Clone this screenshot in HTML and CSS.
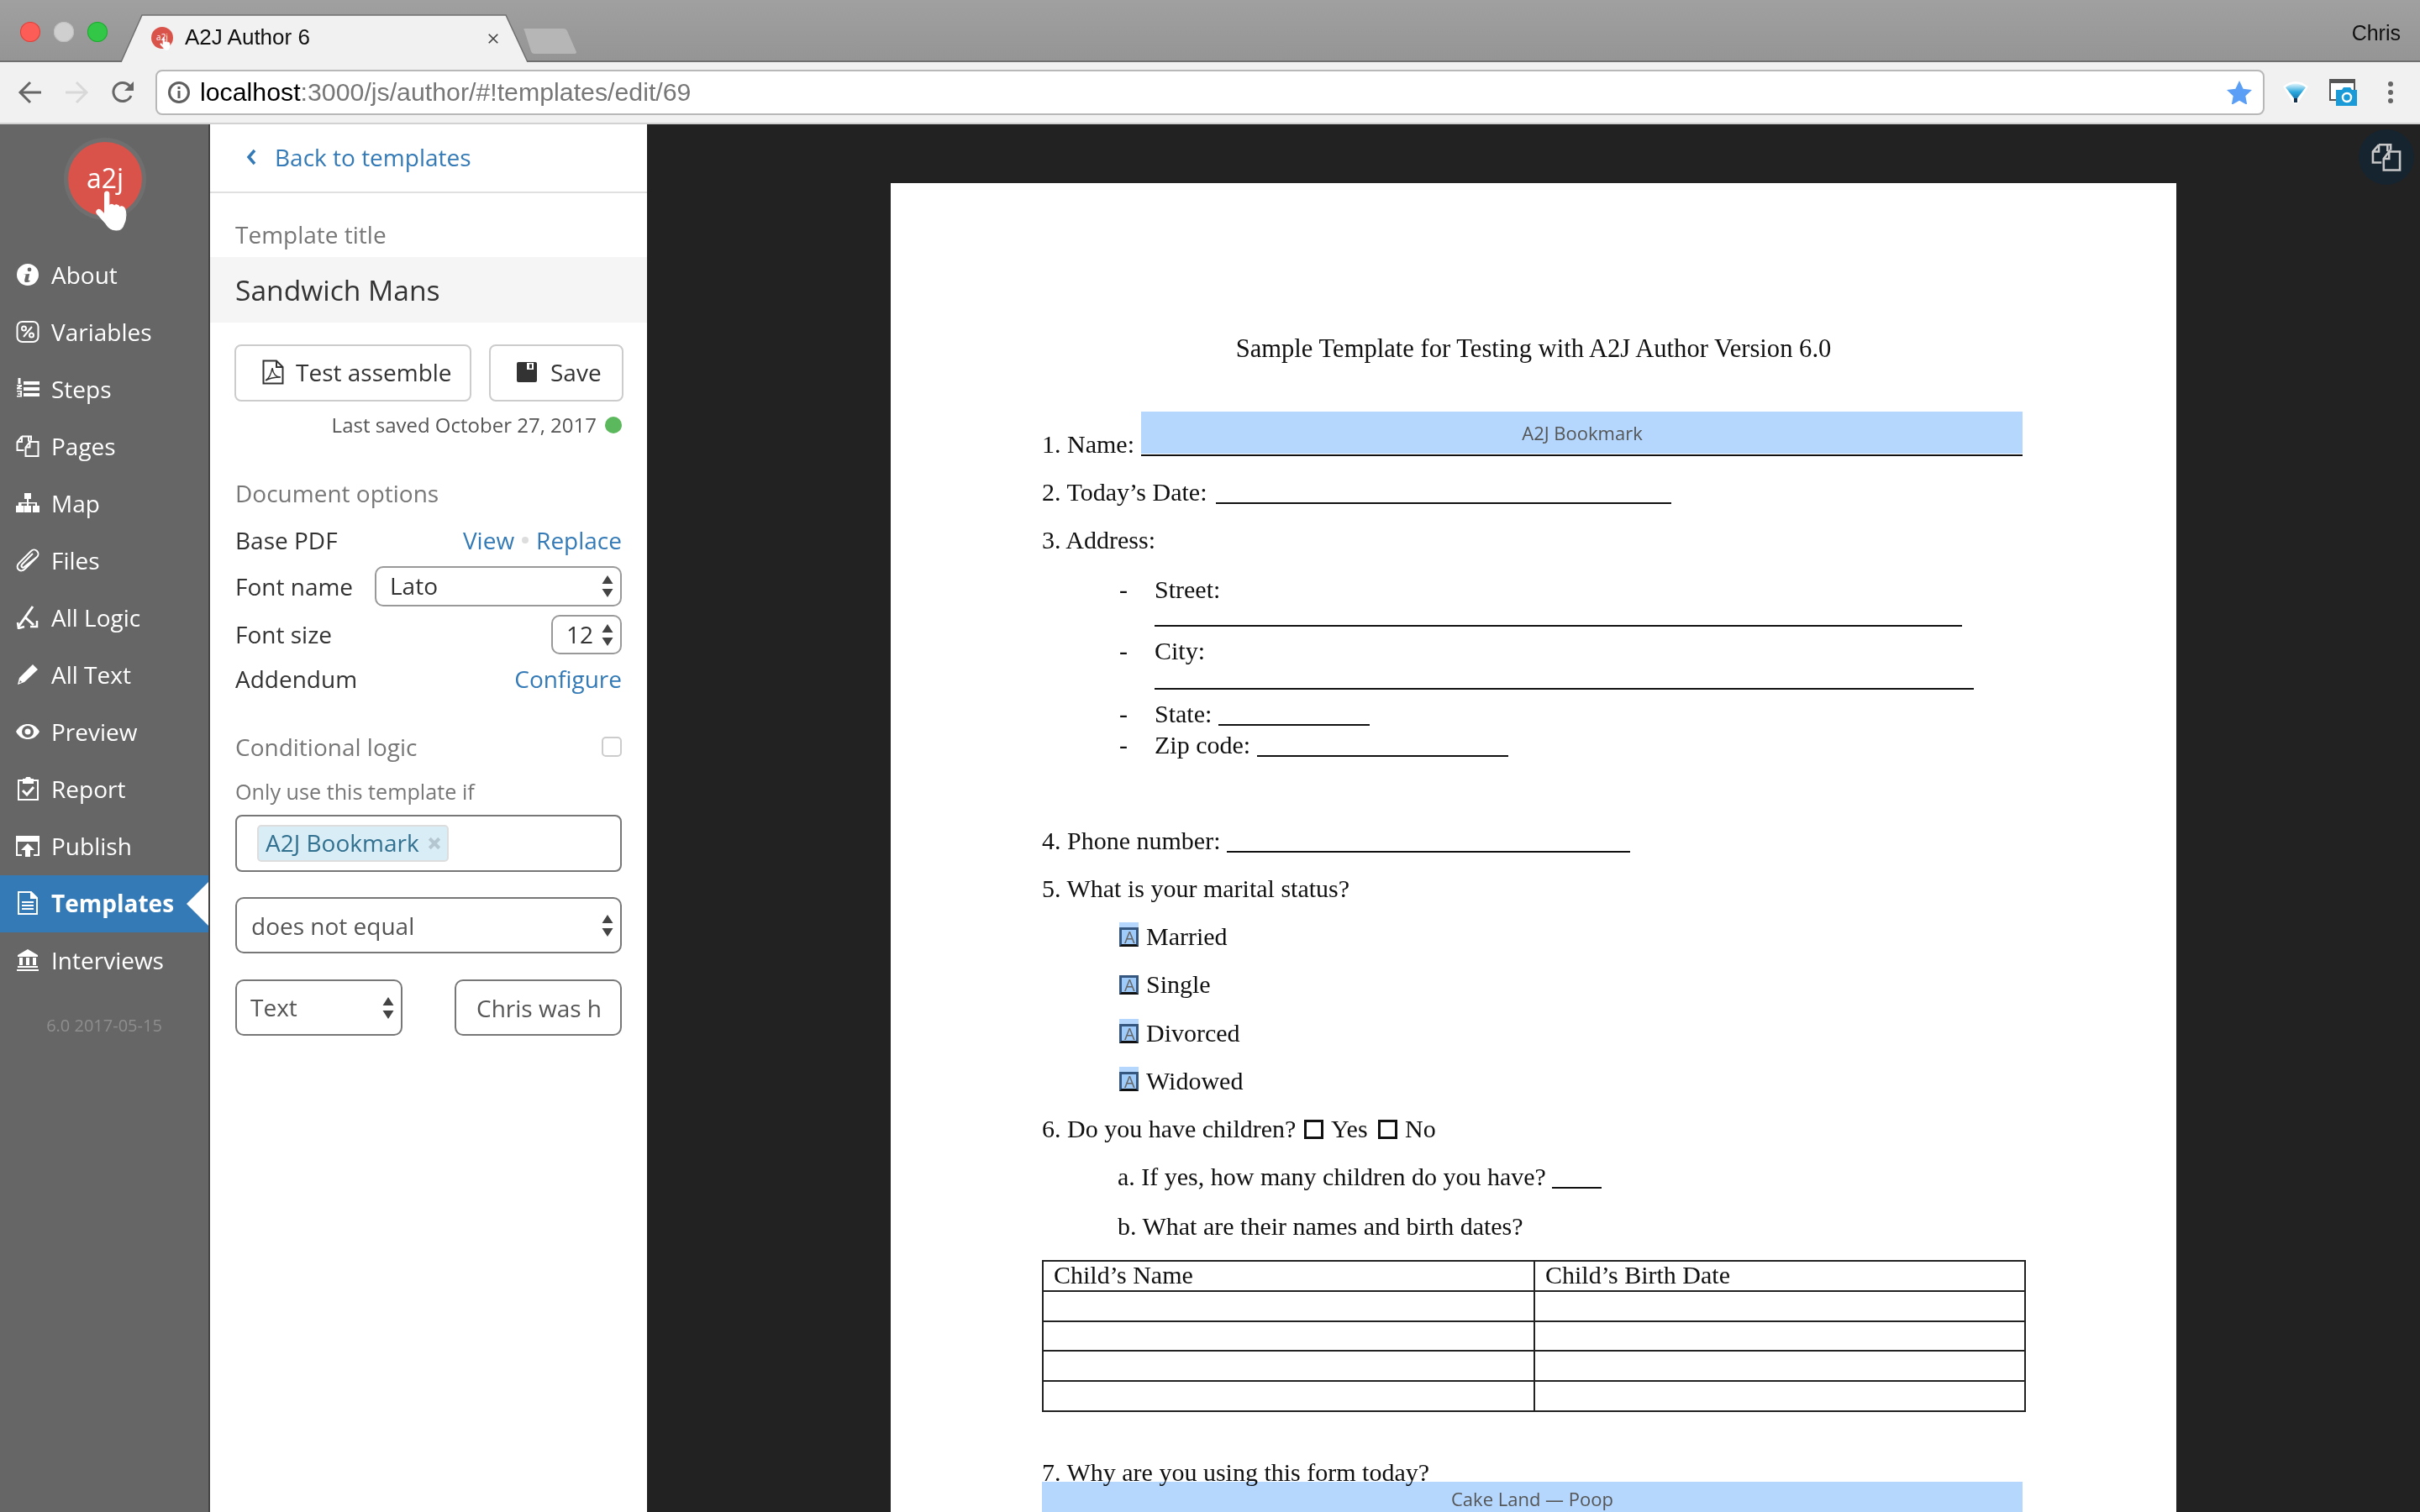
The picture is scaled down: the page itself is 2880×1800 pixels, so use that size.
FILE: index.html
```html
<!DOCTYPE html>
<html lang="en">
<head>
<meta charset="utf-8">
<title>A2J Author 6</title>
<link rel="stylesheet" href="styles.css">
</head>
<body>
<svg class="defs" aria-hidden="true">
  <defs><linearGradient id="funnel-fill" x1="0" y1="0" x2="0" y2="1"><stop offset="0" stop-color="#e4f7fd"/><stop offset=".45" stop-color="#2aa7dd"/><stop offset="1" stop-color="#0b5f96"/></linearGradient></defs>
  <symbol id="updown" viewBox="0 0 14 26"><path d="M7 0l6.500 10H.5zM7 26L.5 16h13z"/></symbol>
  <symbol id="pages" viewBox="0 0 28 28" fill="none" stroke="currentColor" stroke-width="2"><path d="M7 2.500h8v6M15 2.500h3v5M7 2.500L1.500 9v10h8M7 2.500V9H1.500"/><path d="M15 9h3.500M16.500 9h10v17h-15v-10.500L16.500 9v6.500h-5"/></symbol>
  <symbol id="hand" viewBox="0 0 40 46"><path fill="#fff" stroke="#fff" stroke-width="1" stroke-linejoin="round" d="M11 4c0-4 5-4 5 0v14c1-3 5-3 6 0 1-3 5-2 6 1 2-2 5-1 6 2 2 6 1 13-2 19-1 3-4 5-8 5-6 0-9-3-12-8L3 27c-3-3 0-7 3-5l5 5z"/></symbol>
</svg>

<header class="chrome">
  <div class="tabstrip">
    <div class="lights">
      <span class="light light-red"></span>
      <span class="light light-grey"></span>
      <span class="light light-green"></span>
    </div>
    <div class="tab">
      <svg class="tab-shape" viewBox="0 0 484 56" preserveAspectRatio="none"><path d="M0 56L25 1H458L484 56" fill="#f1f1f1" stroke="#6f6f6f" stroke-width="1.500"/></svg>
      <span class="favicon">
        <span class="favicon-text">a2j</span>
        <svg class="favicon-hand"><use href="#hand"/></svg>
      </span>
      <span class="tab-title">A2J Author 6</span>
      <svg class="tab-close" viewBox="0 0 16 16"><path d="M2 2l12 12M14 2L2 14" stroke="#444" stroke-width="2"/></svg>
    </div>
    <svg class="newtab" viewBox="0 0 64 30"><path d="M2 2Q0 0 3 0H48Q52 0 53 3L64 28Q64 30 61 30H14Q11 30 10 27z" fill="#b6b6b6"/></svg>
    <span class="profile">Chris</span>
  </div>
  <div class="toolbar">
    <svg class="tb-icon" viewBox="0 0 30 30" fill="none" stroke="#666" stroke-width="3"><path d="M28 15H3M15 3L3 15l12 12"/></svg>
    <svg class="tb-icon" viewBox="0 0 30 30" fill="none" stroke="#d8d8d8" stroke-width="3"><path d="M2 15h25M15 3l12 12-12 12"/></svg>
    <svg class="tb-icon" viewBox="0 0 30 30" fill="none" stroke="#666" stroke-width="3"><path d="M25 19a11 11 0 1 1-2-12l4 4"/><path d="M28 2v11H17z" fill="#666" stroke="none"/></svg>
    <div class="omnibox">
      <svg class="info" viewBox="0 0 28 28" fill="none" stroke="#5f5f5f" stroke-width="3"><circle cx="14" cy="14" r="11.500"/><path d="M14 12v9M14 7v3"/></svg>
      <span class="url"><span class="host">localhost</span>:3000/js/author/#!templates/edit/69</span>
      <svg class="star" viewBox="0 0 30 28"><path d="M15 0l4.600 9.800 10.400 1.300-7.700 7.200 2 10.700-9.300-5.300-9.300 5.300 2-10.700L0 11.100l10.400-1.300z" fill="#5a9ff5"/></svg>
    </div>
    <svg class="ext ext-funnel" viewBox="0 0 32 32"><path d="M1 9Q16-3 31 9L20 27q-4 6-8 0z" fill="#fff"/><path d="M4 10Q16 1 28 10L18 23v5h-4v-5z" fill="url(#funnel-fill)"/><path d="M14 23h4v5h-4z" fill="#14304a"/></svg>
    <svg class="ext ext-camera" viewBox="0 0 34 32"><path d="M1 1h29v24H1z" fill="#fff" stroke="#555" stroke-width="2"/><path d="M1 1h29v4H1z" fill="#555"/><path d="M8 13h7l2-3h8l2 3h6v19H8z" fill="#1a9ad6"/><circle cx="21" cy="22" r="5" fill="none" stroke="#fff" stroke-width="2.500"/></svg>
    <span class="menu-dots"><i></i><i></i><i></i></span>
  </div>
</header>

<div class="app">
  <nav class="nav">
    <div class="logo">
      <span class="logo-text">a2j</span>
      <svg class="logo-hand"><use href="#hand"/></svg>
    </div>
    <a class="nav-item"><svg class="nav-icon" viewBox="0 0 28 28"><path fill="#fff" fill-rule="evenodd" d="M14 1a13 13 0 1 1 0 26 13 13 0 0 1 0-26zm2 4.500a2.400 2.400 0 1 0 0 4.800 2.400 2.400 0 0 0 0-4.800zM10 12.500l-.3 1.300c1.800-.3 2.100.2 1.700 1.700l-1.100 4.500c-.6 2.600.8 3.200 2.700 3 1.300-.1 2.500-.6 3.500-1.100l.3-1.200c-1.900.5-2.300 0-2-1.400l1.400-6.400c-2 .2-4 .3-6.200.6z"/></svg>About</a>
    <a class="nav-item"><svg class="nav-icon" viewBox="0 0 28 28" fill="none" stroke="#fff" stroke-width="2"><rect x="1.500" y="2" width="25" height="24" rx="6"/><path d="M19 8L9 20"/><circle cx="9.500" cy="10" r="2.500"/><circle cx="18.500" cy="18" r="2.500"/></svg>Variables</a>
    <a class="nav-item"><svg class="nav-icon" viewBox="0 0 28 28" fill="#fff"><path d="M9 5h19v4H9zM9 12h19v4H9zM9 19h19v4H9z"/><path d="M2.500 1h3v7h-3zM1 9h6v2.300L4 13h3v1.500H1v-2l3-2H1zM1 16h6v7.500H1V22h4.200v-1.300H2v-1.400h3.200v-1.800H1z"/></svg>Steps</a>
    <a class="nav-item"><svg class="nav-icon"><use href="#pages"/></svg>Pages</a>
    <a class="nav-item"><svg class="nav-icon" viewBox="0 0 28 28" fill="#fff"><path d="M10 2h8v7h-3v4h10v4h3v8h-8v-8h3v-2.500h-8V17h3v8h-8v-8h3v-2.500H6.500V17h3v8H0v-8h3v-4h10V9h-3z"/></svg>Map</a>
    <a class="nav-item"><svg class="nav-icon" viewBox="0 0 28 28" fill="none" stroke="#fff" stroke-width="2"><path d="M25 10L11 24c-3 3-6 3-8 1s-2-5 1-8L18 3c2-2 5-2 7 0s2 5 0 7L11 21c-2 2-3 2-4 1s-1-2 1-4L20 6"/></svg>Files</a>
    <a class="nav-item"><svg class="nav-icon" viewBox="0 0 28 28" fill="none" stroke="#fff" stroke-width="3"><path d="M20 1L8 18 3 25M11 14l10 9"/><path d="M2 20l1 7 7-2M17 25h8v-7" stroke-width="2.500"/></svg>All Logic</a>
    <a class="nav-item"><svg class="nav-icon" viewBox="0 0 28 28" fill="#fff"><path d="M20 2l6 6L10 23l-8 3 2-8zM4 24l3-1-2-2z"/></svg>All Text</a>
    <a class="nav-item"><svg class="nav-icon" viewBox="0 0 28 28"><path fill="#fff" fill-rule="evenodd" d="M0 14C4 7 9 5 14 5s10 2 14 9c-4 7-9 9-14 9S4 21 0 14zm14-7a7 7 0 1 0 0 14 7 7 0 0 0 0-14zm0 3.500a3.500 3.500 0 1 1 0 7 3.500 3.500 0 0 1 0-7z"/></svg>Preview</a>
    <a class="nav-item"><svg class="nav-icon" viewBox="0 0 28 28" fill="none" stroke="#fff" stroke-width="2"><path d="M9 4H3v23h23V4h-6"/><path d="M9 3h3a2.500 2.500 0 0 1 5 0h3v4H9z" fill="#fff"/><path d="M8 16l5 5 8-9" stroke-width="3"/></svg>Report</a>
    <a class="nav-item"><svg class="nav-icon" viewBox="0 0 28 28" fill="none" stroke="#fff" stroke-width="2"><path d="M7 25H1V3h26v22h-6"/><path d="M1 4h26v4H1z" fill="#fff"/><path d="M14 11l8 8h-5v8h-6v-8H6z" fill="#fff" stroke="none"/></svg>Publish</a>
    <a class="nav-item nav-active"><svg class="nav-icon" viewBox="0 0 28 28" fill="none" stroke="#fff" stroke-width="2"><path d="M3 1h15l7 7v19H3z"/><path d="M18 1v7h7" fill="#fff"/><path d="M7 13h14M7 17h14M7 21h14"/></svg>Templates</a>
    <a class="nav-item"><svg class="nav-icon" viewBox="0 0 28 28" fill="#fff"><path d="M14 1l12 7v2H2V8zM4 11h4v9H4zM12 11h4v9h-4zM20 11h4v9h-4zM2 21h24v2H2zM1 25h26v2H1z"/></svg>Interviews</a>
    <p class="version">6.0 2017-05-15</p>
  </nav>

  <aside class="panel">
    <a class="back"><svg class="back-chevron" viewBox="0 0 12 20"><path d="M10 2L3 10l7 8" fill="none" stroke="#337ab7" stroke-width="3.500"/></svg>Back to templates</a>
    <div class="label label-title">Template title</div>
    <div class="title-input">Sandwich Mans</div>
    <div class="actions">
      <button class="btn btn-test"><svg class="btn-icon" viewBox="0 0 26 30" fill="none" stroke="#333" stroke-width="2"><path d="M1.500 1.500H17L24.500 9v19.500h-23zM17 1.500V9h7.500"/><path d="M4 25c5-3 7-9 8-15 1 7 4 11 10 11-7 0-13 1-18 4z" stroke-width="1.500"/></svg>Test assemble</button>
      <button class="btn btn-save"><svg class="btn-icon-save" viewBox="0 0 24 24"><path fill="#333" fill-rule="evenodd" d="M2 0h20a2 2 0 0 1 2 2v20a2 2 0 0 1-2 2H2a2 2 0 0 1-2-2V2a2 2 0 0 1 2-2zm10 1v8h8V1zm3 1.500h3v5h-3z"/></svg>Save</button>
    </div>
    <div class="saved">Last saved October 27, 2017<span class="saved-dot"></span></div>
    <div class="label label-doc">Document options</div>
    <div class="opt opt-base"><span>Base PDF</span><span class="links"><a class="link">View</a><i class="sep"></i><a class="link">Replace</a></span></div>
    <div class="opt opt-font"><span>Font name</span><div class="select select-font"><span>Lato</span><svg class="updown"><use href="#updown"/></svg></div></div>
    <div class="opt opt-size"><span>Font size</span><div class="select select-size"><span>12</span><svg class="updown"><use href="#updown"/></svg></div></div>
    <div class="opt opt-add"><span>Addendum</span><a class="link">Configure</a></div>
    <div class="opt opt-cond"><span class="muted">Conditional logic</span><span class="checkbox"></span></div>
    <div class="only">Only use this template if</div>
    <div class="tagbox"><span class="tag"><span class="tag-text">A2J Bookmark</span><svg class="tag-x" viewBox="0 0 14 14"><path d="M2 2l10 10M12 2L2 12" stroke="#b4c6cf" stroke-width="3.500"/></svg></span></div>
    <div class="field field-op"><span>does not equal</span><svg class="updown"><use href="#updown"/></svg></div>
    <div class="pair">
      <div class="field field-type"><span>Text</span><svg class="updown"><use href="#updown"/></svg></div>
      <div class="field field-value"><span>Chris was h</span></div>
    </div>
  </aside>

  <main class="viewer">
    <div class="sheet">
      <div class="row row-title">Sample Template for Testing with A2J Author Version 6.0</div>
      <div class="row row-first">1. Name: <span class="blank blank-name"><span class="bookmark bookmark-name">A2J Bookmark</span></span></div>
      <div class="row">2. Today’s Date: <span class="blank blank-date"></span></div>
      <div class="row">3. Address:</div>
      <div class="row row-sub row-street"><span class="dash">-</span>Street:</div>
      <div class="fill fill-street"></div>
      <div class="row row-sub row-city"><span class="dash">-</span>City:</div>
      <div class="fill fill-city"></div>
      <div class="row row-sub row-state"><span class="dash">-</span>State: <span class="blank blank-state"></span></div>
      <div class="row row-sub row-zip"><span class="dash">-</span>Zip code: <span class="blank blank-zip"></span></div>
      <div class="row row-phone">4. Phone number: <span class="blank blank-phone"></span></div>
      <div class="row">5. What is your marital status?</div>
      <div class="row row-opt"><span class="box box-marked box-high">A</span>Married</div>
      <div class="row row-opt"><span class="box box-marked">A</span>Single</div>
      <div class="row row-opt row-s18"><span class="box box-marked box-high">A</span>Divorced</div>
      <div class="row row-opt"><span class="box box-marked box-high">A</span>Widowed</div>
      <div class="row">6. Do you have children? <span class="box box-yes"></span>Yes <span class="box box-no"></span>No</div>
      <div class="row row-ind">a. If yes, how many children do you have? <span class="blank blank-kids"></span></div>
      <div class="row row-ind row-s19">b. What are their names and birth dates?</div>
      <table class="kids">
        <tr><td>Child’s Name</td><td>Child’s Birth Date</td></tr>
        <tr><td></td><td></td></tr>
        <tr><td></td><td></td></tr>
        <tr><td></td><td></td></tr>
        <tr><td></td><td></td></tr>
      </table>
      <div class="row row-seven">7. Why are you using this form today?</div>
      <div class="bookmark bookmark-cake">Cake Land — Poop</div>
    </div>
    <button class="thumbs"><svg class="thumbs-icon"><use href="#pages"/></svg></button>
  </main>
</div>
</body>
</html>
```
FILE: styles.css
```css
* { box-sizing: border-box; }
html, body { margin: 0; height: 1800px; overflow: hidden; background: #222; }
body { font-family: "Open Sans", sans-serif; font-size: 28px; color: #333; }
.defs { position: absolute; width: 0; height: 0; }

/* browser chrome */
.chrome { font-family: "Liberation Sans", sans-serif; }
.tabstrip { height: 74px; display: flex; align-items: flex-end; background: linear-gradient(#a0a0a0, #959595); border-bottom: 2px solid #6f6f6f; position: relative; }
.lights { display: flex; gap: 16px; align-self: flex-start; margin: 26px 0 0 24px; width: 120px; }
.light { width: 24px; height: 24px; border-radius: 50%; }
.light-red { background: #fc5d57; box-shadow: inset 0 0 0 1px #d8433d; }
.light-grey { background: #cfcfcf; box-shadow: inset 0 0 0 1px #bdbdbd; }
.light-green { background: #33c748; box-shadow: inset 0 0 0 1px #20a732; }
.tab { width: 484px; height: 57px; margin-bottom: -2px; position: relative; display: flex; align-items: center; padding: 0 0 2px 36px; z-index: 1; }
.tab-shape { position: absolute; inset: 0; width: 100%; height: 100%; }
.favicon { position: relative; width: 26px; height: 26px; border-radius: 50%; background: #d9534a; color: #fff; font-size: 10px; line-height: 24px; text-align: center; font-family: "Open Sans", sans-serif; flex: none; }
.favicon-text { display: block; }
.favicon-hand { position: absolute; left: 10px; top: 12px; width: 14px; height: 16px; }
.tab-title { position: relative; margin-left: 14px; font-size: 26px; color: #111; }
.tab-close { position: absolute; right: 34px; top: 22px; width: 14px; height: 14px; }
.newtab { width: 64px; height: 30px; margin: 0 0 8px -6px; flex: none; }
.profile { margin-left: auto; margin-right: 23px; align-self: flex-start; margin-top: 25px; font-size: 25px; color: #111; }
.toolbar { height: 74px; background: #f1f1f1; border-bottom: 2px solid #d2d2d2; display: flex; align-items: center; padding-left: 21px; }
.tb-icon { width: 30px; height: 30px; margin-right: 25px; flex: none; }
.tb-icon:nth-child(3) { margin-right: 24px; }
.omnibox { width: 2510px; height: 54px; background: #fff; border: 2px solid #b8b8b8; border-radius: 8px; display: flex; align-items: center; padding-left: 12px; flex: none; }
.info { width: 28px; height: 28px; flex: none; }
.url { margin-left: 11px; font-size: 30.300px; color: #777; }
.host { color: #000; }
.star { width: 30px; height: 28px; margin-left: auto; margin-right: 13px; }
.ext { flex: none; }
.ext-funnel { width: 32px; height: 32px; margin-left: 21px; }
.ext-camera { width: 34px; height: 32px; margin-left: 24px; }
.menu-dots { display: flex; flex-direction: column; gap: 4px; margin-left: 36px; }
.menu-dots i { width: 6px; height: 6px; border-radius: 50%; background: #666; }

/* app */
.app { display: flex; height: 1652px; }
.nav { width: 250px; background: #666; border-right: 2px solid #444; flex: none; }
.logo { position: relative; width: 88px; height: 88px; margin: 21px 0 37px 81px; border-radius: 50%; background: #d9534a; box-shadow: 0 0 0 5px #6f6f6f; color: #fff; font-size: 32px; font-weight: 400; line-height: 85px; text-align: center; }
.logo-text { display: block; }
.logo-hand { position: absolute; left: 32px; top: 57px; width: 42px; height: 50px; }
.nav-item { display: flex; align-items: center; height: 68px; padding: 0 0 2px 19px; color: #fff; font-size: 28px; position: relative; }
.nav-icon { width: 28px; height: 28px; margin-right: 14px; color: #fff; flex: none; }
.nav-active { background: #337ab7; font-weight: 700; }
.nav-active::after { content: ""; position: absolute; right: 0; top: 8px; border-style: solid; border-width: 26px 26px 26px 0; border-color: transparent #fff transparent transparent; }
.version { margin: 26px 0 0; text-align: center; font-size: 20px; line-height: 34px; color: #8e8e8e; }

/* panel */
.panel { width: 520px; background: #fff; padding: 0 30px; flex: none; overflow: hidden; }
.back { display: flex; align-items: center; height: 82px; margin: 0 -30px; padding: 0 0 2px 42px; border-bottom: 2px solid #e0e0e0; color: #337ab7; font-size: 28px; }
.back-chevron { width: 14px; height: 20px; margin-right: 21px; }
.label { font-size: 28px; line-height: 36px; color: #777; }
.label-title { margin-top: 31px; }
.label-doc { margin-top: 48px; }
.title-input { margin: 9px -30px 0; height: 78px; padding-left: 30px; background: #f5f5f5; font-size: 33.600px; line-height: 78px; color: #333; }
.actions { display: flex; justify-content: space-between; margin: 26px 0 0 -1px; width: 463px; }
.btn { display: flex; align-items: center; height: 68px; background: #fff; border: 2px solid #ccc; border-radius: 8px; font: inherit; color: #333; padding: 0 0 2px; }
.btn-test { width: 282px; padding-left: 31px; }
.btn-save { width: 160px; padding-left: 31px; }
.btn-icon { width: 26px; height: 30px; margin-right: 14px; }
.btn-icon-save { width: 24px; height: 24px; margin-right: 16px; }
.saved { display: flex; justify-content: flex-end; align-items: center; margin-top: 13px; height: 30px; padding-bottom: 2px; font-size: 24px; color: #555; }
.saved-dot { width: 20px; height: 20px; border-radius: 50%; background: #5cb85c; margin: 2px 0 0 10px; }
.opt { display: flex; justify-content: space-between; align-items: center; line-height: 36px; color: #333; }
.opt-base { margin-top: 20px; height: 36px; }
.opt-font { margin-top: 13px; height: 48px; }
.opt-size { margin-top: 10px; height: 47px; }
.opt-size > span:first-child { padding-bottom: 2px; }
.opt-add { margin-top: 11px; height: 36px; }
.opt-cond { margin-top: 45px; height: 36px; }
.link { color: #337ab7; }
.links { display: flex; align-items: center; }
.sep { width: 8px; height: 8px; border-radius: 50%; background: #ddd; margin: 0 9px; }
.muted { color: #777; }
.select { display: flex; align-items: center; justify-content: space-between; height: 100%; background: #fff; border: 2px solid #999; border-radius: 10px; padding: 0 8px 0 16px; }
.select > span { padding-bottom: 2px; }
.select-font { width: 294px; }
.select-size { width: 84px; }
.updown { width: 14px; height: 26px; fill: #444; flex: none; }
.checkbox { width: 24px; height: 24px; border: 2px solid #ccc; border-radius: 5px; }
.only { margin-top: 19px; height: 32px; font-size: 25.200px; line-height: 32px; color: #777; }
.tagbox { margin-top: 12px; height: 68px; border: 2px solid #777; border-radius: 8px; padding: 10px 0 0 24px; }
.tag { display: inline-flex; align-items: center; height: 44px; background: #d9edf7; border: 2px solid #ddd; border-radius: 5px; padding: 0 7px 0 8px; color: #31708f; }
.tag-text { padding-bottom: 2px; }
.tag-x { width: 16px; height: 16px; margin-left: 10px; }
.field { display: flex; align-items: center; justify-content: space-between; height: 67px; border: 2px solid #777; border-radius: 10px; color: #555; background: #fff; padding: 0 8px 0 17px; }
.field-op { margin-top: 30px; }
.pair { display: flex; justify-content: space-between; margin-top: 31px; }
.field-type { width: 199px; padding-left: 16px; }
.field-type > span { padding-bottom: 2px; }
.field-value { width: 199px; padding-left: 24px; white-space: nowrap; overflow: hidden; }

/* document viewer */
.viewer { flex: 1; position: relative; padding: 70px 0 0 290px; background: #222; overflow: hidden; }
.sheet { position: relative; width: 1530px; height: 1600px; background: #fff; padding: 177px 0 0 180px; font-family: "Liberation Serif", serif; font-size: 30px; color: #111; }
.row { display: block; height: 40px; line-height: 40px; margin-top: 17px; white-space: nowrap; }
.row-title { margin-top: 0; width: 1170px; text-align: center; font-size: 30.600px; }
.row-first { margin-top: 74px; }
.row-sub { padding-left: 92px; }
.dash { display: inline-block; width: 42px; }
.row-street { margin-top: 19px; }
.row-city, .row-state { margin-top: 9px; }
.row-state { height: 37px; }
.row-zip { margin-top: 0; }
.row-phone { margin-top: 74px; }
.row-opt { padding-left: 92px; }
.row-s18 { margin-top: 18px; }
.row-s19 { margin-top: 19px; }
.row-ind { padding-left: 90px; }
.row-seven { margin-top: 52px; }
.blank { display: inline-block; position: relative; height: 26px; vertical-align: -4px; border-bottom: 2px solid #111; }
.blank-name { width: 1049px; margin-left: 1px; }
.blank-date { width: 542px; margin-left: 3px; }
.blank-state { width: 180px; }
.blank-zip { width: 299px; }
.blank-phone { width: 480px; }
.blank-kids { width: 59px; }
.fill { margin-left: 134px; border-bottom: 2px solid #111; }
.fill-street { width: 961px; height: 24px; }
.fill-city { width: 975px; height: 26px; }
.bookmark { position: absolute; background: #b5d7fd; font-family: "Open Sans", sans-serif; font-size: 22px; color: #555; display: flex; align-items: center; justify-content: center; }
.bookmark-name { left: 0; right: 0; bottom: 1px; height: 50px; }
.bookmark-cake { left: 180px; width: 1167px; height: 36px; top: 1546px; padding-top: 3px; mix-blend-mode: multiply; }
.box { display: inline-block; position: relative; width: 23px; height: 23px; vertical-align: -2px; border: 3px solid #111; }
.box-yes { margin: 0 9px 0 2px; }
.box-no { margin: 0 9px 0 5px; }
.box-marked { margin-right: 9px; padding-left: 3px; vertical-align: 2px; font: 400 20px/17px "Open Sans", sans-serif; color: #666; background: #9fcbfa; border-color: #34567f #34567f #111; }
.box-high { box-shadow: 0 -6px 0 #b5d7fd; }
.kids { border-collapse: collapse; table-layout: fixed; width: 1171px; margin-top: 20px; }
.kids tr { height: 35.800px; }
.kids td { border: 2px solid #222; padding: 0 12px 2px; line-height: 30px; font-size: 30px; overflow: hidden; white-space: nowrap; }
.kids td:first-child { width: 585px; }
.thumbs { position: absolute; right: 7px; top: 6px; width: 66px; height: 66px; border: 0; border-radius: 50%; background: #162430; padding: 0; display: flex; align-items: center; justify-content: center; }
.thumbs-icon { width: 36px; height: 36px; color: #c8c8c8; }
```
